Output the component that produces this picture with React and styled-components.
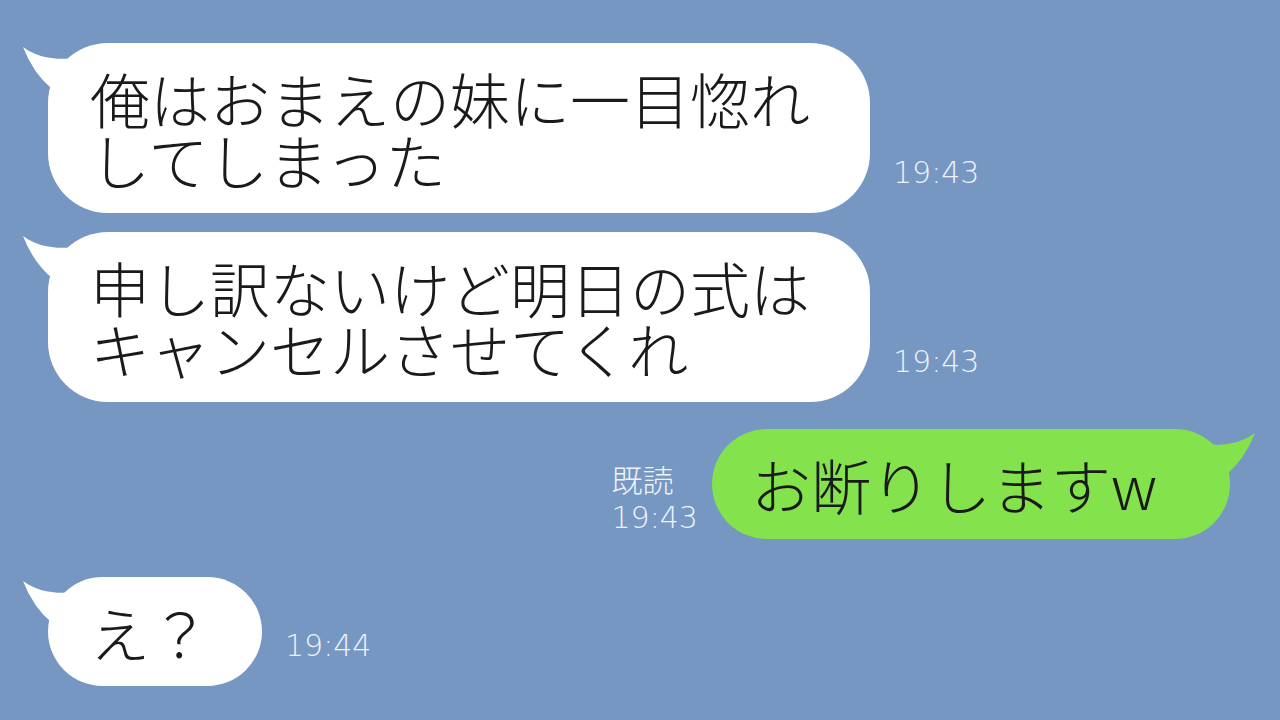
import styled, { createGlobalStyle } from "styled-components";

const GlobalStyle = createGlobalStyle`
  html, body {
    margin: 0;
    padding: 0;
    background: #7797c3;
  }
`;

// 画面全体
const Screen = styled.div`
  width: 1280px;
  height: 720px;
  overflow: hidden;
  background: #7797c3;
  box-sizing: border-box;
  padding-top: 43px;
  display: flex;
  flex-direction: column;
  font-family: "Noto Sans CJK JP", "Noto Sans", sans-serif;
`;

// メッセージ行
const Row = styled.div`
  display: flex;
  align-items: flex-end;
  justify-content: ${(p) => (p.$mine ? "flex-end" : "flex-start")};
  margin-top: ${(p) => p.$space || 0}px;
  padding: ${(p) => (p.$mine ? "0 50px 0 0" : "0 0 0 48px")};
  gap: ${(p) => (p.$mine ? 14 : 23)}px;
`;

// 吹き出し
const Bubble = styled.div`
  position: relative;
  background: ${(p) => (p.$mine ? "#84e24c" : "#ffffff")};
  border-radius: 60px;
  padding: ${(p) =>
    p.$mine ? "24px 73px 25px 39px" : `24px ${p.$padRight}px 24px 42px`};
  font-size: 60px;
  font-weight: 300;
  line-height: 61px;
  color: #1a1a1a;
  white-space: pre;
`;

const Tail = styled.svg`
  position: absolute;
  top: 0;
  width: 60px;
  height: 50px;
  ${(p) =>
    p.$mine
      ? "right: -27px; transform: scaleX(-1);"
      : "left: -27px;"}
`;

// 時刻・既読
const Meta = styled.div`
  display: flex;
  flex-direction: column;
  align-items: flex-start;
  font-family: "DejaVu Sans", sans-serif;
  font-weight: 200;
  font-size: 30px;
  line-height: ${(p) => (p.$mine ? 39 : 36)}px;
  color: #eef2f9;
  margin-bottom: ${(p) => (p.$mine ? 2 : 22)}px;
`;

const ReadMark = styled.span`
  font-family: "Noto Sans CJK JP", sans-serif;
  font-weight: 300;
  font-size: 31px;
`;

function BubbleTail({ mine }) {
  return (
    <Tail $mine={mine} viewBox="0 0 60 50">
      <path
        d="M2 4 Q22 19 56 15 L58 46 L31 46 Q12 30 2 4 Z"
        fill={mine ? "#84e24c" : "#ffffff"}
      />
    </Tail>
  );
}

const messages = [
  { text: "俺はおまえの妹に一目惚れ\nしてしまった", time: "19:43", space: 0, pad: 60 },
  { text: "申し訳ないけど明日の式は\nキャンセルさせてくれ", time: "19:43", space: 19, pad: 60 },
  { text: "お断りしますw", time: "19:43", space: 27, mine: true },
  { text: "え？", time: "19:44", space: 38, pad: 52 },
];

export default function App() {
  return (
    <>
      <GlobalStyle />
      <Screen>
        {messages.map((m, i) =>
          m.mine ? (
            <Row key={i} $mine $space={m.space}>
              <Meta $mine>
                <ReadMark>既読</ReadMark>
                <span>{m.time}</span>
              </Meta>
              <Bubble $mine>
                <BubbleTail mine />
                {m.text}
              </Bubble>
            </Row>
          ) : (
            <Row key={i} $space={m.space}>
              <Bubble $padRight={m.pad}>
                <BubbleTail />
                {m.text}
              </Bubble>
              <Meta>{m.time}</Meta>
            </Row>
          )
        )}
      </Screen>
    </>
  );
}
